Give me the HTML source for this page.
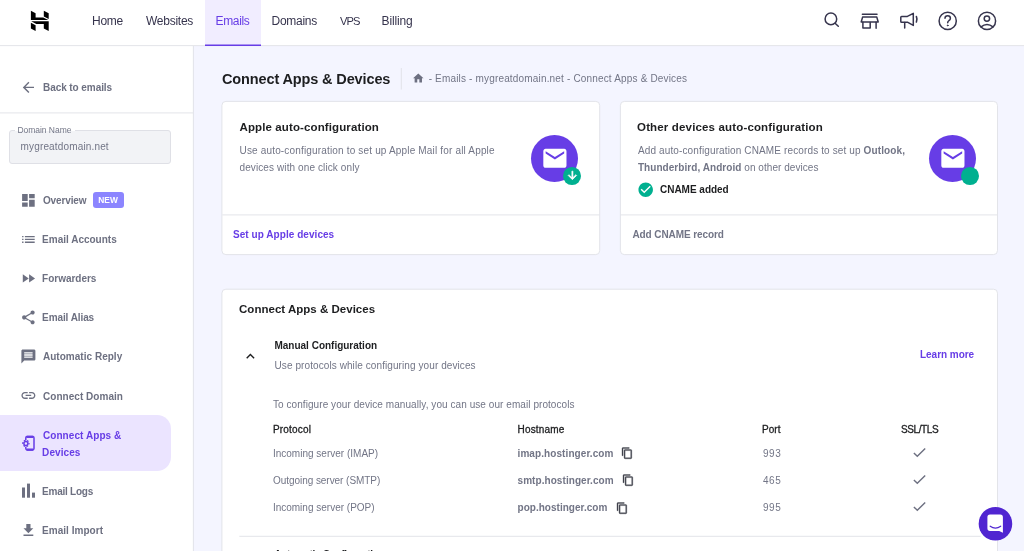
<!DOCTYPE html>
<html><head><meta charset="utf-8"><title>Connect Apps &amp; Devices</title>
<style>
*{box-sizing:border-box;margin:0;padding:0}
html,body{width:1024px;height:551px;overflow:hidden}
body{background:#f4f5ff;font-family:"Liberation Sans",sans-serif;position:relative}
.a{position:absolute}
.t{position:absolute;white-space:nowrap;line-height:16px;height:16px}
.t b{font-weight:700}
svg{position:absolute;overflow:visible}
.card{position:absolute;background:#fff;border:1px solid #dadce0;border-radius:4px}
.hr{position:absolute;height:1px;background:#dadce0}
</style></head><body>
<!-- header -->
<div class="a" style="left:0;top:0;width:1024px;height:46px;background:#fff"></div>
<div class="a" style="left:205px;top:0;width:56px;height:46px;background:#f1edff"></div>
<!-- logo -->
<svg style="left:0;top:0" width="80" height="46" viewBox="0 0 80 46"><g fill="#000">
<path d="M30.9 10.7 35.6 13.2 35.6 17.4 43.2 17.4 48.3 20 30.9 20Z"/>
<path d="M43.8 10.7 48.7 13.2 48.7 19.05 43.8 16.5Z"/>
<path d="M31.2 21.2 48.7 21.2 48.7 31 43.8 28.5 43.8 23.9 36.3 23.9Z"/>
<path d="M30.9 22.7 35.6 25.2 35.6 30.9 30.9 28.5Z"/>
</g></svg>
<!-- header icons -->
<svg style="left:815px;top:5px" width="209" height="36" viewBox="815 5 209 36" fill="none" stroke="#36344d" stroke-width="1.5" stroke-linecap="round" stroke-linejoin="round">
<circle cx="830.9" cy="18.9" r="5.8"/><path d="M835.1 23.2 838.3 26.3"/>
<!-- store -->
<path d="M862.4 14.2H877"/><path d="M862.6 17.1H876.8L878.2 22H861.2Z"/><path d="M862.9 22.2V28H870.2V22.4"/><path d="M876.1 22.2V28.2"/>
<!-- megaphone -->
<path d="M901.6 16.4H907.4L913.3 13.4V25.4L907.4 22.2H901.6Q900.8 22.2 900.8 21.4V17.2Q900.8 16.4 901.6 16.4Z"/><path d="M904.7 22.4V28"/>
<path d="M916.4 16.6Q917.6 19.3 916.4 22" stroke-width="1.6"/>
<!-- help -->
<circle cx="947.7" cy="20.9" r="8.6"/>
<path d="M945 18.3Q945 15.8 947.7 15.8Q950.4 15.8 950.4 18.2Q950.4 19.6 949 20.5Q947.7 21.4 947.7 22.8"/><circle cx="947.7" cy="25.4" r="0.5" fill="#36344d" stroke-width="0.8"/>
<!-- account -->
<circle cx="987" cy="20.9" r="8.6"/><circle cx="986.9" cy="18.6" r="2.7"/><path d="M981 26.9Q987 22 993 26.9"/>
</svg>

<!-- sidebar -->
<div class="a" style="left:0;top:46px;width:193px;height:505px;background:#fff"></div>

<div class="a" style="left:9px;top:130px;width:162px;height:33.5px;background:#f2f3f6;border:1px solid #dfe0e6;border-radius:3px"></div>
<div class="a" style="left:15px;top:125px;width:59.5px;height:6px;background:#fff"></div>
<div class="a" style="left:93px;top:191.6px;width:31px;height:16.6px;background:#8c85ff;border-radius:3px"></div>
<div class="a" style="left:0;top:415.3px;width:171px;height:56px;background:#ebe4ff;border-radius:0 14px 14px 0"></div>
<!-- sidebar icons: 16.8px boxes centred at x=28.5 -->
<svg style="left:20.1px;top:78.9px" width="16.8" height="16.8" viewBox="0 0 24 24" fill="#6d7081"><path d="M20 11H7.83l5.59-5.59L12 4l-8 8 8 8 1.41-1.41L7.83 13H20v-2z"/></svg>
<svg style="left:20.1px;top:191.7px" width="16.8" height="16.8" viewBox="0 0 24 24" fill="#6d7081"><path d="M3 13h8V3H3v10zm0 8h8v-6H3v6zm10 0h8V11h-8v10zm0-18v6h8V3h-8z"/></svg>
<svg style="left:20.1px;top:230.8px" width="16.8" height="16.8" viewBox="0 0 24 24" fill="#6d7081"><path d="M3 13h2v-2H3v2zm0 4h2v-2H3v2zm0-8h2V7H3v2zm4 4h14v-2H7v2zm0 4h14v-2H7v2zM7 7v2h14V7H7z"/></svg>
<svg style="left:20.1px;top:269.9px" width="16.8" height="16.8" viewBox="0 0 24 24" fill="#6d7081"><path d="M4 18l8.5-6L4 6v12zm9-12v12l8.5-6L13 6z"/></svg>
<svg style="left:20.1px;top:309.1px" width="16.8" height="16.8" viewBox="0 0 24 24" fill="#6d7081"><path d="M18 16.08c-.76 0-1.44.3-1.96.77L8.91 12.7c.05-.23.09-.46.09-.7s-.04-.47-.09-.7l7.05-4.11c.54.5 1.25.81 2.04.81 1.66 0 3-1.34 3-3s-1.34-3-3-3-3 1.34-3 3c0 .24.04.47.09.7L8.04 9.81C7.5 9.31 6.79 9 6 9c-1.66 0-3 1.34-3 3s1.34 3 3 3c.79 0 1.5-.31 2.04-.81l7.12 4.16c-.05.21-.08.43-.08.65 0 1.61 1.31 2.92 2.92 2.92 1.61 0 2.92-1.31 2.92-2.92s-1.31-2.92-2.92-2.92z"/></svg>
<svg style="left:20.1px;top:347.9px" width="16.8" height="16.8" viewBox="0 0 24 24" fill="#6d7081"><path d="M20 2H4c-1.1 0-1.99.9-1.99 2L2 22l4-4h14c1.1 0 2-.9 2-2V4c0-1.1-.9-2-2-2zm-2 12H6v-2h12v2zm0-3H6V9h12v2zm0-3H6V6h12v2z"/></svg>
<svg style="left:20.1px;top:387.4px" width="16.8" height="16.8" viewBox="0 0 24 24" fill="#6d7081"><path d="M3.9 12c0-1.71 1.39-3.1 3.1-3.1h4V7H7c-2.76 0-5 2.24-5 5s2.24 5 5 5h4v-1.9H7c-1.710 0-3.100-1.39-3.100-3.100zM8 13h8v-2H8v2zm9-6h-4v1.900h4c1.710 0 3.100 1.390 3.100 3.100s-1.390 3.100-3.100 3.100h-4V17h4c2.760 0 5-2.240 5-5s-2.240-5-5-5z"/></svg>
<svg style="left:0;top:0" width="60" height="551" viewBox="0 0 60 551" fill="none" stroke="#673de6"><path d="M25.8 440.2V437.8Q25.8 436.4 27.2 436.4H32.6Q34 436.4 34 437.800V448.600Q34 450 32.600 450H27.200Q25.800 450 25.800 448.600V446.800" stroke-width="1.5"/><path d="M26.500 436.800H33.300M26.500 449.600H33.300" stroke-width="2.200"/><circle cx="25.9" cy="443.4" r="2" stroke-width="1.5"/><circle cx="25.9" cy="443.4" r="3.1" stroke-width="1.3" stroke-dasharray="1.7 1.546" stroke-dashoffset="0.85"/></svg>
<svg style="left:0;top:0" width="60" height="551" viewBox="0 0 60 551" fill="#6d7081"><rect x="22" y="487.5" width="3" height="10.2"/><rect x="27" y="483.600" width="3" height="14.100"/><rect x="32" y="492.600" width="3" height="5.100"/></svg>
<svg style="left:20.3px;top:522.2px" width="16.8" height="16.8" viewBox="0 0 24 24" fill="#6d7081"><path d="M19 9h-4V3H9v6H5l7 7 7-7zM5 18v2h14v-2H5z"/></svg>

<!-- title divider + home icon -->

<svg style="left:412.150px;top:72.200px" width="12.600" height="12.600" viewBox="0 0 24 24" fill="#6d7081"><path d="M10 20v-6h4v6h5v-8h3L12 3 2 12h3v8z"/></svg>

<!-- card 1 -->
<svg style="left:0;top:0" width="1024" height="551" viewBox="0 0 1024 551"><g fill="#fff" stroke="#e0e1e7" stroke-width="0.9"><rect x="221.9" y="101.4" width="377.8" height="153.2" rx="4"/><rect x="620.4" y="101.4" width="377.1" height="153.2" rx="4"/><rect x="221.9" y="289.2" width="775.6" height="300" rx="4"/></g></svg>
<svg style="left:0;top:0" width="1024" height="551" viewBox="0 0 1024 551" fill="none" stroke="#e0e1e7" stroke-width="0.9">
<path d="M0 45.600H1024"/><path d="M193.400 46V551"/><path d="M0 112.900H193"/>
<path d="M401.300 68V89.500"/>
<path d="M222.400 214.900H599.300"/><path d="M620.900 214.900H997"/>
<path d="M239.300 536.300H980.700"/>
<path d="M205 45.300H261" stroke="#673de6" stroke-width="1.400"/>
</svg>

<div class="a" style="left:531px;top:134.700px;width:47.200px;height:47.200px;border-radius:50%;background:#673de6"></div>
<svg style="left:540.700px;top:143.950px" width="27.800" height="28.600" viewBox="0 0 24 24" preserveAspectRatio="none" fill="#fff"><path d="M20 4H4c-1.100 0-1.990.9-1.990 2L2 18c0 1.100.9 2 2 2h16c1.100 0 2-.9 2-2V6c0-1.100-.9-2-2-2zm0 4l-8 5-8-5V6l8 5 8-5v2z"/></svg>
<div class="a" style="left:563.400px;top:166.800px;width:17.800px;height:17.800px;border-radius:50%;background:#00b090"></div>
<svg style="left:565.900px;top:169.300px" width="12.800" height="12.800" viewBox="0 0 24 24" fill="#fff" stroke="#fff" stroke-width="1.200"><path d="M20 12l-1.410-1.410L13 16.170V4h-2v12.170l-5.580-5.590L4 12l8 8 8-8z"/></svg>

<!-- card 2 -->


<div class="a" style="left:929px;top:134.700px;width:47.200px;height:47.200px;border-radius:50%;background:#673de6"></div>
<svg style="left:938.700px;top:143.950px" width="27.800" height="28.600" viewBox="0 0 24 24" preserveAspectRatio="none" fill="#fff"><path d="M20 4H4c-1.100 0-1.990.9-1.990 2L2 18c0 1.100.9 2 2 2h16c1.100 0 2-.9 2-2V6c0-1.100-.9-2-2-2zm0 4l-8 5-8-5V6l8 5 8-5v2z"/></svg>
<div class="a" style="left:961.400px;top:166.800px;width:17.800px;height:17.800px;border-radius:50%;background:#00b090"></div>
<svg style="left:636.900px;top:180.800px" width="17.400" height="17.400" viewBox="0 0 24 24" fill="#00b090"><circle cx="12" cy="12" r="8" fill="#fff"/><path d="M12 2C6.480 2 2 6.480 2 12s4.480 10 10 10 10-4.480 10-10S17.520 2 12 2zm-2 15l-5-5 1.410-1.410L10 14.170l7.590-7.590L19 8l-9 9z"/></svg>

<!-- panel -->

<svg style="left:242.200px;top:348.200px" width="16.800" height="16.800" viewBox="0 0 24 24" fill="#1d1e20"><path d="M12 8l-6 6 1.410 1.410L12 10.830l4.590 4.580L18 14z"/></svg>

<!-- copy icons -->
<svg style="left:620.800px;top:447.200px" width="12.300" height="12.300" viewBox="0 0 24 24" fill="#3f404b" stroke="#3f404b" stroke-width="0.700"><path d="M16 1H4c-1.100 0-2 .9-2 2v14h2V3h12V1zm3 4H8c-1.100 0-2 .9-2 2v14c0 1.100.9 2 2 2h11c1.100 0 2-.9 2-2V7c0-1.100-.9-2-2-2zm0 16H8V7h11v14z"/></svg>
<svg style="left:621.700px;top:474.200px" width="12.300" height="12.300" viewBox="0 0 24 24" fill="#3f404b" stroke="#3f404b" stroke-width="0.700"><path d="M16 1H4c-1.100 0-2 .9-2 2v14h2V3h12V1zm3 4H8c-1.100 0-2 .9-2 2v14c0 1.100.9 2 2 2h11c1.100 0 2-.9 2-2V7c0-1.100-.9-2-2-2zm0 16H8V7h11v14z"/></svg>
<svg style="left:615.500px;top:501.500px" width="12.300" height="12.300" viewBox="0 0 24 24" fill="#3f404b" stroke="#3f404b" stroke-width="0.700"><path d="M16 1H4c-1.100 0-2 .9-2 2v14h2V3h12V1zm3 4H8c-1.100 0-2 .9-2 2v14c0 1.100.9 2 2 2h11c1.100 0 2-.9 2-2V7c0-1.100-.9-2-2-2zm0 16H8V7h11v14z"/></svg>
<!-- checks -->
<svg style="left:911.100px;top:443.900px" width="16.800" height="16.800" viewBox="0 0 24 24" fill="#6d7081"><path d="M9 16.170L4.830 12l-1.420 1.410L9 19 21 7l-1.410-1.410z"/></svg>
<svg style="left:911.100px;top:471.200px" width="16.800" height="16.800" viewBox="0 0 24 24" fill="#6d7081"><path d="M9 16.170L4.830 12l-1.420 1.410L9 19 21 7l-1.410-1.410z"/></svg>
<svg style="left:911.100px;top:498.400px" width="16.800" height="16.800" viewBox="0 0 24 24" fill="#6d7081"><path d="M9 16.170L4.830 12l-1.420 1.410L9 19 21 7l-1.410-1.410z"/></svg>

<div class="a" style="left:0;top:0;width:1024px;height:551px;will-change:transform">
<div class="t" id="n1" style="left:92.10px;top:13.00px;font-size:12px;font-weight:400;color:#36344d;letter-spacing:-0.300px;">Home</div>
<div class="t" id="n2" style="left:146.00px;top:13.00px;font-size:12px;font-weight:400;color:#36344d;letter-spacing:-0.257px;">Websites</div>
<div class="t" id="n3" style="left:215.60px;top:13.00px;font-size:12px;font-weight:400;color:#673de6;letter-spacing:-0.360px;">Emails</div>
<div class="t" id="n4" style="left:271.60px;top:13.00px;font-size:12px;font-weight:400;color:#36344d;letter-spacing:-0.300px;">Domains</div>
<div class="t" id="n5" style="left:340.00px;top:13.00px;font-size:11.2px;font-weight:400;color:#36344d;letter-spacing:-0.900px;">VPS</div>
<div class="t" id="n6" style="left:381.60px;top:13.00px;font-size:12px;font-weight:400;color:#36344d;letter-spacing:-0.150px;">Billing</div>
<div class="t" id="s0" style="left:43.00px;top:80.10px;font-size:10px;font-weight:700;color:#6d7081;letter-spacing:-0.069px;">Back to emails</div>
<div class="t" id="s1" style="left:17.50px;top:121.60px;font-size:8.5px;font-weight:400;color:#727586;letter-spacing:-0.043px;">Domain Name</div>
<div class="t" id="s2" style="left:20.54px;top:139.30px;font-size:10px;font-weight:400;color:#727586;letter-spacing:0.157px;">mygreatdomain.net</div>
<div class="t" id="s3" style="left:42.98px;top:193.00px;font-size:10px;font-weight:700;color:#6d7081;letter-spacing:-0.129px;">Overview</div>
<div class="t" id="s3b" style="left:98.30px;top:191.60px;font-size:8.4px;font-weight:700;color:#ffffff;letter-spacing:0.027px;">NEW</div>
<div class="t" id="s4" style="left:42.08px;top:232.10px;font-size:10px;font-weight:700;color:#6d7081;letter-spacing:0.000px;">Email Accounts</div>
<div class="t" id="s5" style="left:42.08px;top:271.10px;font-size:10px;font-weight:700;color:#6d7081;letter-spacing:-0.020px;">Forwarders</div>
<div class="t" id="s6" style="left:42.08px;top:310.30px;font-size:10px;font-weight:700;color:#6d7081;letter-spacing:-0.090px;">Email Alias</div>
<div class="t" id="s7" style="left:42.98px;top:349.30px;font-size:10px;font-weight:700;color:#6d7081;letter-spacing:0.026px;">Automatic Reply</div>
<div class="t" id="s8" style="left:42.98px;top:388.60px;font-size:10px;font-weight:700;color:#6d7081;letter-spacing:0.042px;">Connect Domain</div>
<div class="t" id="s9" style="left:42.98px;top:427.50px;font-size:10px;font-weight:700;color:#673de6;letter-spacing:0.069px;">Connect Apps &amp;</div>
<div class="t" id="s9b" style="left:42.08px;top:444.50px;font-size:10px;font-weight:700;color:#673de6;letter-spacing:0.090px;">Devices</div>
<div class="t" id="s10" style="left:42.08px;top:483.50px;font-size:10px;font-weight:700;color:#6d7081;letter-spacing:-0.240px;">Email Logs</div>
<div class="t" id="s11" style="left:42.08px;top:522.80px;font-size:10px;font-weight:700;color:#6d7081;letter-spacing:0.033px;">Email Import</div>
<div class="t" id="t1" style="left:222.00px;top:71.00px;font-size:14.5px;font-weight:700;color:#1d1e20;letter-spacing:-0.129px;">Connect Apps &amp; Devices</div>
<div class="t" id="t2" style="left:428.64px;top:71.20px;font-size:10px;font-weight:400;color:#727586;letter-spacing:0.170px;">- Emails - mygreatdomain.net - Connect Apps &amp; Devices</div>
<div class="t" id="c1a" style="left:239.50px;top:119.00px;font-size:11.5px;font-weight:700;color:#1d1e20;letter-spacing:0.117px;">Apple auto-configuration</div>
<div class="t" id="c1b" style="left:239.50px;top:142.90px;font-size:10px;font-weight:400;color:#727586;letter-spacing:0.167px;">Use auto-configuration to set up Apple Mail for all Apple</div>
<div class="t" id="c1c" style="left:239.50px;top:159.50px;font-size:10px;font-weight:400;color:#727586;letter-spacing:0.104px;">devices with one click only</div>
<div class="t" id="c1d" style="left:233.06px;top:227.20px;font-size:10px;font-weight:700;color:#673de6;letter-spacing:0.047px;">Set up Apple devices</div>
<div class="t" id="c2a" style="left:637.04px;top:119.00px;font-size:11.5px;font-weight:700;color:#1d1e20;letter-spacing:0.157px;">Other devices auto-configuration</div>
<div class="t" id="c2b" style="left:637.94px;top:142.90px;font-size:10px;font-weight:400;color:#727586;letter-spacing:0.130px;">Add auto-configuration CNAME records to set up <b>Outlook,</b></div>
<div class="t" id="c2c" style="left:637.94px;top:159.50px;font-size:10px;font-weight:400;color:#727586;letter-spacing:0.055px;"><b>Thunderbird, Android</b> on other devices</div>
<div class="t" id="c2d" style="left:660.00px;top:181.90px;font-size:10px;font-weight:700;color:#1d1e20;letter-spacing:-0.018px;">CNAME added</div>
<div class="t" id="c2e" style="left:632.46px;top:227.20px;font-size:10px;font-weight:700;color:#727586;letter-spacing:-0.096px;">Add CNAME record</div>
<div class="t" id="p1" style="left:239.06px;top:301.20px;font-size:11.5px;font-weight:700;color:#1d1e20;letter-spacing:0.017px;">Connect Apps &amp; Devices</div>
<div class="t" id="p2" style="left:274.50px;top:338.40px;font-size:10px;font-weight:700;color:#1d1e20;letter-spacing:-0.009px;">Manual Configuration</div>
<div class="t" id="p3" style="left:274.50px;top:358.10px;font-size:10px;font-weight:400;color:#727586;letter-spacing:0.088px;">Use protocols while configuring your devices</div>
<div class="t" id="p4" style="left:920.02px;top:347.00px;font-size:10px;font-weight:700;color:#673de6;letter-spacing:-0.040px;">Learn more</div>
<div class="t" id="p5" style="left:273.00px;top:397.00px;font-size:10px;font-weight:400;color:#727586;letter-spacing:0.066px;">To configure your device manually, you can use our email protocols</div>
<div class="t" id="h1" style="left:273.00px;top:422.20px;font-size:10px;font-weight:400;color:#1d1e20;letter-spacing:0.180px;-webkit-text-stroke:0.3px #1d1e20">Protocol</div>
<div class="t" id="h2" style="left:517.54px;top:422.20px;font-size:10px;font-weight:400;color:#1d1e20;letter-spacing:0.180px;-webkit-text-stroke:0.3px #1d1e20">Hostname</div>
<div class="t" id="h3" style="left:762.08px;top:422.20px;font-size:10px;font-weight:400;color:#1d1e20;letter-spacing:0.000px;-webkit-text-stroke:0.3px #1d1e20">Port</div>
<div class="t" id="h4" style="left:901.00px;top:422.20px;font-size:10px;font-weight:400;color:#1d1e20;letter-spacing:-0.390px;-webkit-text-stroke:0.3px #1d1e20">SSL/TLS</div>
<div class="t" id="r1a" style="left:272.90px;top:445.90px;font-size:10px;font-weight:400;color:#727586;letter-spacing:0.009px;">Incoming server (IMAP)</div>
<div class="t" id="r1b" style="left:517.54px;top:445.90px;font-size:10px;font-weight:700;color:#727586;letter-spacing:0.085px;">imap.hostinger.com</div>
<div class="t" id="r1c" style="left:762.98px;top:445.90px;font-size:10px;font-weight:400;color:#727586;letter-spacing:0.540px;">993</div>
<div class="t" id="r2a" style="left:273.00px;top:472.80px;font-size:10px;font-weight:400;color:#727586;letter-spacing:-0.051px;">Outgoing server (SMTP)</div>
<div class="t" id="r2b" style="left:517.54px;top:472.80px;font-size:10px;font-weight:700;color:#727586;letter-spacing:0.064px;">smtp.hostinger.com</div>
<div class="t" id="r2c" style="left:762.98px;top:472.80px;font-size:10px;font-weight:400;color:#727586;letter-spacing:0.540px;">465</div>
<div class="t" id="r3a" style="left:272.90px;top:500.10px;font-size:10px;font-weight:400;color:#727586;letter-spacing:0.000px;">Incoming server (POP)</div>
<div class="t" id="r3b" style="left:517.54px;top:500.10px;font-size:10px;font-weight:700;color:#727586;letter-spacing:0.023px;">pop.hostinger.com</div>
<div class="t" id="r3c" style="left:762.98px;top:500.10px;font-size:10px;font-weight:400;color:#727586;letter-spacing:0.540px;">995</div>
<div class="t" id="p6" style="left:274.20px;top:547.30px;font-size:10px;font-weight:700;color:#1d1e20;letter-spacing:-0.305px;">Automatic Configuration</div>
</div>

<!-- chat button -->
<svg style="left:970px;top:500px" width="54" height="51" viewBox="970 500 54 51"><circle cx="995.450" cy="523.750" r="16.800" fill="#5025d1"/><path d="M990 514.600H1000.300Q1002.900 514.600 1002.900 517.200V532.700L999.200 530.900H990Q987.400 530.900 987.400 528.300V517.200Q987.400 514.600 990 514.600Z" fill="#fff"/><path d="M990.200 526.200Q995.450 530 1000.700 526.200" fill="none" stroke="#5025d1" stroke-width="1.200" stroke-linecap="round"/></svg>
</body></html>
